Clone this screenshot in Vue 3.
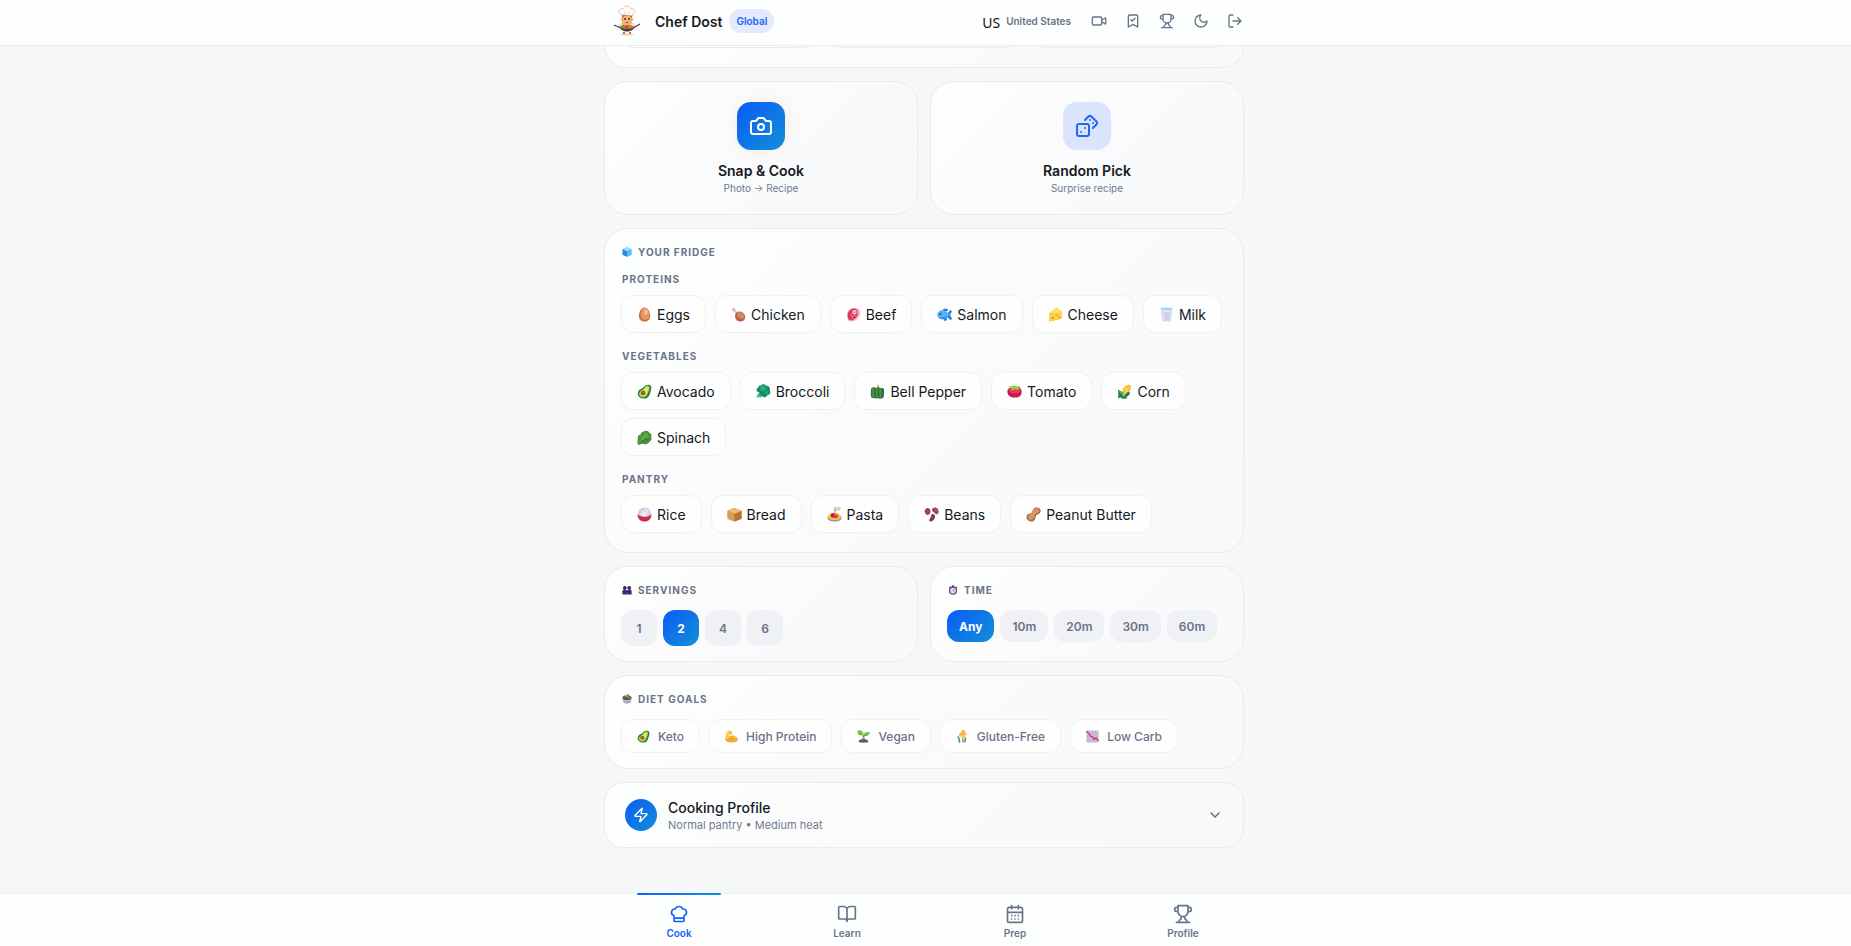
<script setup>
import { ref } from 'vue'

const icons = {
  video: '<path d="m16 13 5.223 3.482a.5.5 0 0 0 .777-.416V7.87a.5.5 0 0 0-.752-.432L16 10.5"/><rect x="2" y="6" width="14" height="12" rx="2"/>',
  saved: '<path d="m19 21-7-4-7 4V5a2 2 0 0 1 2-2h10a2 2 0 0 1 2 2Z"/><path d="m9 10 2 2 4-4"/>',
  trophy: '<path d="M6 9H4.5a2.5 2.5 0 0 1 0-5H6M18 9h1.5a2.5 2.5 0 0 0 0-5H18M4 22h16M10 14.66V17c0 .55-.47.98-.97 1.21C7.85 18.75 7 20.24 7 22M14 14.66V17c0 .55.47.98.97 1.21C16.15 18.75 17 20.24 17 22M18 2H6v7a6 6 0 0 0 12 0V2Z"/>',
  moon: '<path d="M12 3a6 6 0 0 0 9 9 9 9 0 1 1-9-9Z"/>',
  logout: '<path d="M9 21H5a2 2 0 0 1-2-2V5a2 2 0 0 1 2-2h4M16 17l5-5-5-5M21 12H9"/>',
  camera: '<path d="M14.5 4h-5L7 7H4a2 2 0 0 0-2 2v9a2 2 0 0 0 2 2h16a2 2 0 0 0 2-2V9a2 2 0 0 0-2-2h-3l-2.500-3z"/><circle cx="12" cy="13" r="3"/>',
  dices: '<rect width="12" height="12" x="2" y="10" rx="2"/><path d="m17.92 14 3.5-3.5a2.24 2.24 0 0 0 0-3l-5-4.920a2.24 2.24 0 0 0-3 0L10 6M6 18h.01M10 14h.01M15 6h.01M18 9h.01"/>',
  zap: '<path d="M4 14a1 1 0 0 1-.78-1.630l9.900-10.200a.5.5 0 0 1 .86.460l-1.920 6.020A1 1 0 0 0 13 10h7a1 1 0 0 1 .78 1.630l-9.900 10.200a.5.5 0 0 1-.86-.460l1.920-6.020A1 1 0 0 0 11 14z"/>',
  chevron: '<path d="m6 9 6 6 6-6"/>',
  hat: '<path d="M17 21a1 1 0 0 0 1-1v-5.350c0-.457.316-.844.727-1.041a4 4 0 0 0-2.134-7.589 5 5 0 0 0-9.186 0 4 4 0 0 0-2.134 7.588c.411.198.727.585.727 1.041V20a1 1 0 0 0 1 1ZM6 17h12"/>',
  book: '<path d="M12 7v14M3 18a1 1 0 0 1-1-1V4a1 1 0 0 1 1-1h5a4 4 0 0 1 4 4 4 4 0 0 1 4-4h5a1 1 0 0 1 1 1v13a1 1 0 0 1-1 1h-6a3 3 0 0 0-3 3 3 3 0 0 0-3-3z"/>',
  calendar: '<path d="M8 2v4M16 2v4M3 10h18M8 14h.01M12 14h.01M16 14h.01M8 18h.01M12 18h.01M16 18h.01"/><rect width="18" height="18" x="3" y="4" rx="2"/>'
}

const art = {
  ice: '<path d="M16 1 30 7v18l-14 6-14-6V7z" fill="#35a8ee"/><path d="M16 1 30 7l-14 7L2 7z" fill="#8ee4ff"/><path d="M16 14 30 7v18l-14 6z" fill="#49c1f7"/><path d="M16 14 2 7v18l14 6z" fill="#2f86e0"/>',
  egg: '<path d="M16 1c7 0 12 10 12 18 0 7-5 12-12 12S4 26 4 19C4 11 9 1 16 1z" fill="#c9733f"/><path d="M17 2c6 1 9 9 9 16 0 6-4 9-9 9S8 23 8 17 12 2 17 2z" fill="#e39a62"/><ellipse cx="19" cy="11" rx="4" ry="6" fill="#f4bd8c"/>',
  chicken: '<path d="m3 5 3-4 4 3-1 3 7 6-4 3-7-7-4-1z" fill="#d8b5e8"/><path d="M11 12c7-5 17-1 19 7 2 9-7 14-14 11-7-2-10-12-5-18z" fill="#b9684d"/><path d="M15 12c7-2 13 2 13 8 0 5-6 6-9 3-5-2-8-8-4-11z" fill="#d28a63"/><path d="M11 23c4 7 12 8 18 2-1 7-17 8-18-2z" fill="#c94667"/>',
  beef: '<path d="M9 5C17-1 28 1 30 9c2 9-4 18-13 21-8 3-14 0-14-7C0 15 3 9 9 5z" fill="#f1b6c0"/><path d="M8 7C16 0 25 4 25 12c0 9-5 13-12 16-6 2-9-2-9-8-1-5 0-9 4-13z" fill="#d8385d"/><circle cx="18" cy="11" r="4.500" fill="#ffe4e3"/><circle cx="18" cy="11" r="2" fill="#bb405d"/><path d="M9 15c4 3 6 6 4 10M14 19l7-2" stroke="#f98a9c" stroke-width="2" fill="none"/>',
  fish: '<path d="M10 8 16 3l7 1v5zM12 23l5 8 5-5-2-5z" fill="#2f7cd6"/><path d="m20 16 9-10 3 4-4 6 4 9-3 3-9-8z" fill="#2f86e4"/><path d="M0 17C2 4 18 3 26 16 19 30 3 29 0 17z" fill="#51b4fa"/><path d="M3 21c6 3 15 1 21-4-7 12-17 11-21 4z" fill="#3a8ce6"/><circle cx="7" cy="15" r="2" fill="#183e80"/>',
  cheese: '<path d="M4 13 18 1l11 8v16L2 31z" fill="#f5bd38"/><path d="M4 13 18 1l11 8-2 4z" fill="#ffe062"/><path d="m3 15 26-4v14L2 31z" fill="#ffd145"/><circle cx="10" cy="23" r="2.500" fill="#e69a2c"/><circle cx="19" cy="17" r="1.500" fill="#e69a2c"/><circle cx="24" cy="22" r="2" fill="#e69a2c"/>',
  milk: '<path d="m3 1 4 30h18l4-30z" fill="#b8e7f8"/><path d="m6 7 3 21h14l3-21z" fill="#e9e2f5"/><path d="m10 10 2 18h10l2-18z" fill="#d7cce8"/><path d="M5 3h22v3H5z" fill="#8ad3ef"/>',
  avocado: '<path d="M22 2c7-2 10 3 8 10-2 8-4 19-14 19C7 31 0 26 2 18 4 10 11 11 14 7c2-3 4-4 8-5z" fill="#267e43"/><path d="M21 4c6-1 7 4 5 9-2 6-5 15-12 15-6 0-11-4-9-9 2-6 8-6 11-10 1-3 2-4 5-5z" fill="#b9dc37"/><path d="M20 7c5 0 4 4 2 9-2 5-4 10-9 9-5 0-7-5-3-8s6-10 10-10z" fill="#e0ec70"/><circle cx="13" cy="19" r="5" fill="#875f31"/><circle cx="12" cy="17" r="2" fill="#b17b3a"/>',
  broccoli: '<path d="m1 29 2-6 9-9 8 6-10 9-4-1z" fill="#34bba1"/><path d="M10 3c4-4 11-2 12 1 6-1 9 5 7 9 4 5 0 11-4 10-2 6-9 7-12 2-5 0-7-3-5-7-8-1-9-9-3-10 0-4 2-5 5-5z" fill="#168f63"/><circle cx="15" cy="9" r="6" fill="#24b177"/><circle cx="23" cy="17" r="4" fill="#1fa87b"/>',
  pepper: '<path d="M13 8c1-2 3-3 2-6l4-1c1 4-1 5 0 8z" fill="#b5d34b"/><path d="M2 12c1-6 8-6 11-3 5-3 8-2 10 0 6-2 8 2 7 8l-1 12c-4 3-8 3-12 1-4 2-7 1-9 0-8 2-6-11-6-18z" fill="#2c7145"/><path d="M7 8v21M14 10v19M22 9v20" stroke="#57953f" stroke-width="4"/><path d="M10 9v20M18 10v19" stroke="#2c6c3d" stroke-width="2"/>',
  tomato: '<path d="M1 14C2 7 12 6 16 9c5-4 15-2 15 6 1 11-6 14-15 14S0 24 1 14z" fill="#c9164b"/><path d="M3 12c3-7 23-6 26 1 1 9-23 11-26-1z" fill="#e8375f"/><path d="M2 5h9l5-2 4 2h10l-5 5 1 3-9-2-8 3 1-5z" fill="#92ce35"/>',
  corn: '<path d="M12 14C14 4 24-1 29 3c2 6-2 15-9 20l-9-2z" fill="#edaf2b"/><path d="m16 8 12 6M14 12l11 6M22 2l-6 18M27 3l-8 18" stroke="#ffe16a" stroke-width="2"/><path d="M2 12c7 3 12 6 13 13l8-8 5 1c-1 6-5 8-9 10l4 2c-7 3-12 1-16-2l-5 3 1-8z" fill="#17803c"/><path d="M4 15c6 4 9 8 10 13" stroke="#59bd4d" stroke-width="3" fill="none"/>',
  spinach: '<path d="M1 30c0-5 0-7 1-10-2-7 2-9 6-11 1-5 5-6 9-7 5-2 9 1 9 4 6 2 6 6 4 9 3 5 0 7-3 10-5 6-10 6-17 4l-5 3z" fill="#4b913c"/><path d="m5 25 19-18M8 12l5 4v7M17 6v8h8" stroke="#86bd45" stroke-width="2" fill="none"/><path d="m8 29 4-7 13-2" stroke="#277334" stroke-width="2" fill="none"/>',
  rice: '<path d="M1 16c1 10 6 15 15 15s14-5 15-15z" fill="#d52448"/><path d="M2 16C2 6 9 1 16 1s14 5 14 15c-6 7-22 7-28 0z" fill="#d3c9de"/><path d="M7 13c3-7 11-11 17-7 2 4 0 11-4 13-5 2-12 0-13-6z" fill="#f0e9f5"/><path d="m10 6 2 2m4-3 1 2m-8 4 2 1m8 2 3-1m-6-5 3 2m3-4 2 2" stroke="#aba4bd" stroke-width="1.500"/>',
  bread: '<path d="m1 8 14-6 16 6v17l-15 6L2 25z" fill="#c58143"/><path d="m1 8 14-6 16 6-15 7z" fill="#ebbb72"/><path d="m1 9 15 6v16L1 25z" fill="#d79c58"/><path d="m16 15 15-6v16l-15 6z" fill="#b97338"/>',
  pasta: '<ellipse cx="16" cy="24" rx="15" ry="7" fill="#9180c0"/><ellipse cx="16" cy="21" rx="15" ry="7" fill="#f1c73d"/><ellipse cx="16" cy="18" rx="10" ry="6" fill="#f5a737"/><circle cx="13" cy="18" r="5" fill="#b52451"/><circle cx="19" cy="20" r="4" fill="#dc3450"/><path d="M14 2h15M15 6h13M17 3v12" stroke="#a9a6b9" stroke-width="2"/><path d="M17 4v12" stroke="#e8b04d" stroke-width="3" fill="none"/>',
  beans: '<path d="M3 5c7-7 11 1 11 5-1 5-4 7-7 7-5-1-7-9-4-12z" fill="#93424e"/><path d="M20 2c7-3 12 3 11 9-2 7-7 4-9 1-4-2-8-7-2-10z" fill="#9a4551"/><path d="M19 15c7 1 5 10 0 14-5 4-10 1-7-3 4-3 1-11 7-11z" fill="#7d354a"/><path d="m7 7 2 2m16-4 1 4m-8 10-1 4" stroke="#c36a70" stroke-width="2"/>',
  peanut: '<path d="M21 1c7-1 11 3 10 9-2 6-8 5-10 9-1 6-2 12-10 12-8-1-12-7-9-13 2-5 7-3 10-6s2-9 9-11z" fill="#ae6547"/><path d="M20 3c6-2 9 2 8 6-2 4-7 3-9 8-2 5-3 10-9 10-6-1-7-5-5-8 2-4 6-3 9-7 1-4 1-7 6-9z" fill="#dd9d6d"/><path d="m20 4 6 4m-9-1 5 4m-10 4 6 2m-9 1 5 5m-8-3 4 4" stroke="#bc7750" stroke-width="1.500"/>',
  people: '<circle cx="9" cy="9" r="6" fill="#35205e"/><circle cx="23" cy="9" r="6" fill="#35205e"/><path d="M1 30v-9c0-5 3-7 8-7s7 2 7 5c0-3 2-5 7-5s8 2 8 7v9z" fill="#4f2c80"/><path d="M3 21h26M8 13v17M24 13v17" stroke="#382061" stroke-width="2"/>',
  clock: '<path d="M12 1h8v6h-8zM3 8l4-4 3 3-4 4zm21-1 2-3 4 5-3 2z" fill="#67547a"/><circle cx="16" cy="18" r="13" fill="#5b4775"/><circle cx="16" cy="18" r="9" fill="#e2d7f2"/><path d="m21 13-5 5 4 3" stroke="#df3155" stroke-width="2" fill="none"/>',
  salad: '<path d="M2 15C0 8 8 3 12 6c3-6 10-5 12 0 6 0 8 6 6 10-5 6-24 6-28-1z" fill="#237241"/><circle cx="9" cy="10" r="4" fill="#cd3557"/><circle cx="23" cy="12" r="4" fill="#e14768"/><circle cx="16" cy="7" r="4" fill="#80b849"/><path d="M2 17c3 5 25 5 28 0-1 8-4 14-14 14S3 25 2 17z" fill="#b5a4cb"/>',
  muscle: '<path d="m5 5 7-4 6 5-2 5-5-1-1 7c7-7 18-3 21 4 2 7-4 10-13 10C7 31 0 27 1 20z" fill="#f2a32d"/><path d="m6 5 5-2 5 4-5 1-2 12c-3 3-5 4-6 0z" fill="#ffcf45"/><path d="M13 19c7-6 15-3 16 4-4-4-11-5-16-4z" fill="#ffd25c"/><path d="M4 23c5 5 17 6 25 0-2 8-23 8-25 0z" fill="#f8b838"/>',
  sprout: '<path d="M14 13C5 15 1 9 1 2c9-2 14 2 15 9 3-6 8-7 15-6 0 7-5 11-13 9v13h-4z" fill="#5ca83b"/><path d="M3 4c5 1 9 3 12 8 3-4 7-5 14-5" stroke="#9bd36b" stroke-width="3" fill="none"/><path d="M4 29c0-5 6-7 12-7s12 3 12 7c-1 3-24 3-24 0z" fill="#7d4c54"/><path d="M15 13h3v10h-3z" fill="#65ad40"/>',
  wheat: '<path d="M17 31V13" stroke="#5a9b52" stroke-width="3"/><path d="m9 31-2-11m14 10 3-11" stroke="#479c72" stroke-width="4"/><path d="M12 7c0-5 3-7 7-7s5 3 2 7c5-2 7 2 3 5l-5 3c-5-1-9 4-11-1-2-4 1-5 4-7z" fill="#f4bc3f"/><path d="M12 15c0-5 12-4 12 1s-7 8-8 4z" fill="#f0cb63"/><path d="M4 15c4 0 6 4 5 8-4 0-7-4-5-8z" fill="#74ab56"/>',
  chart: '<rect x="1" y="1" width="30" height="30" rx="2" fill="#cbbddf"/><path d="M1 8h30M1 16h30M1 24h30M8 1v30M16 1v30M24 1v30" stroke="#b5a7cd"/><path d="m1 3 6 6 5 7 4 1 4 5 5-2 6 7" stroke="#e31e54" stroke-width="3" fill="none"/>'
}

const fridge = [
  { name: 'Proteins', items: [['egg', 'Eggs'], ['chicken', 'Chicken'], ['beef', 'Beef'], ['fish', 'Salmon'], ['cheese', 'Cheese'], ['milk', 'Milk']] },
  { name: 'Vegetables', items: [['avocado', 'Avocado'], ['broccoli', 'Broccoli'], ['pepper', 'Bell Pepper'], ['tomato', 'Tomato'], ['corn', 'Corn'], ['spinach', 'Spinach']] },
  { name: 'Pantry', items: [['rice', 'Rice'], ['bread', 'Bread'], ['pasta', 'Pasta'], ['beans', 'Beans'], ['peanut', 'Peanut Butter']] }
]
const diets = [['avocado', 'Keto'], ['muscle', 'High Protein'], ['sprout', 'Vegan'], ['wheat', 'Gluten-Free'], ['chart', 'Low Carb']]
const tools = [['video', 'Videos'], ['saved', 'Saved recipes'], ['trophy', 'Achievements'], ['moon', 'Dark mode'], ['logout', 'Sign out']]
const tabs = [['hat', 'Cook'], ['book', 'Learn'], ['calendar', 'Prep'], ['trophy', 'Profile']]

const servings = ref(2)
const time = ref('Any')
const tab = ref('Cook')
const picked = ref([])

function toggle(name) {
  picked.value = picked.value.includes(name) ? picked.value.filter((n) => n !== name) : [...picked.value, name]
}
</script>

<template>
  <div class="page">
    <header class="topbar">
      <div class="topbar-inner">
        <svg class="logo" viewBox="0 0 32 32" aria-hidden="true">
          <circle cx="16" cy="16" r="16" fill="#fff" />
          <ellipse cx="16" cy="29.500" rx="7" ry="1.500" fill="#f8d9b9" />
          <path d="M11 18c-3 1-3 4-2 6h14c1-2 1-5-2-6z" fill="#f8eee4" stroke="#cc9b79" stroke-width=".6" />
          <path d="M11 10h10v7c0 5-10 5-10 0z" fill="#f5b477" />
          <path d="M11 9h10v4l-2-2h-6l-2 2z" fill="#a65a2c" />
          <circle cx="10.800" cy="14.500" r="1.200" fill="#efa368" /><circle cx="21.200" cy="14.500" r="1.200" fill="#efa368" />
          <circle cx="14" cy="14" r=".9" fill="#3b2820" /><circle cx="18" cy="14" r=".9" fill="#3b2820" />
          <path d="M14 17c1 1.500 3 1.500 4 0z" fill="#b73431" />
          <path d="M10 10c0-2-2-1-2-3 0-3 3-4 4-3 1-4 7-4 8 0 3-1 5 2 3 4-2 1-1 1-1 3-4-1-8-1-12-1z" fill="#fffdf9" stroke="#d5b8a0" stroke-width=".8" />
          <path d="M14 6v3m4-3v3" stroke="#dfc9b9" stroke-width=".7" />
          <path d="m3 20 7 3m19-4-7 4" stroke="#403d47" stroke-width="1.200" />
          <path d="M9 22h14c-1 6-13 6-14 0z" fill="#3e3d4a" />
          <ellipse cx="16" cy="22" rx="7" ry="2" fill="#d8632b" />
          <circle cx="12" cy="21" r="1.500" fill="#55a53e" /><circle cx="19" cy="21" r="1.500" fill="#70b943" /><circle cx="16" cy="22" r="1.500" fill="#db3b2f" />
          <path d="M13 27v2m6-2v2" stroke="#a47b5c" stroke-width="2" />
        </svg>
        <span class="brand">Chef Dost</span>
        <span class="badge">Global</span>
        <button class="country" type="button"><span class="code">US</span><span>United States</span></button>
        <button v-for="[icon, label] in tools" :key="icon" class="tool" type="button" :aria-label="label">
          <svg class="line" viewBox="0 0 24 24" v-html="icons[icon]"></svg>
        </button>
      </div>
    </header>

    <main class="content">
      <section class="card tail"><div></div><div></div><div></div></section>

      <div class="pair">
        <button class="card action" type="button">
          <span class="tile solid"><svg class="line" viewBox="0 0 24 24" v-html="icons.camera"></svg></span>
          <span class="action-title">Snap &amp; Cook</span>
          <span class="note">Photo → Recipe</span>
        </button>
        <button class="card action" type="button">
          <span class="tile soft"><svg class="line" viewBox="0 0 24 24" v-html="icons.dices"></svg></span>
          <span class="action-title">Random Pick</span>
          <span class="note">Surprise recipe</span>
        </button>
      </div>

      <section class="card panel fridge">
        <h2 class="heading"><svg class="mini" viewBox="0 0 32 32" v-html="art.ice"></svg>Your Fridge</h2>
        <div v-for="group in fridge" :key="group.name" class="group">
          <h3 class="heading">{{ group.name }}</h3>
          <div class="chips">
            <button v-for="[pic, name] in group.items" :key="name" class="chip" type="button" :aria-pressed="picked.includes(name)" @click="toggle(name)">
              <svg class="emoji" viewBox="0 0 32 32" v-html="art[pic]"></svg>{{ name }}
            </button>
          </div>
        </div>
      </section>

      <div class="pair">
        <section class="card panel">
          <h2 class="heading"><svg class="mini" viewBox="0 0 32 32" v-html="art.people"></svg>Servings</h2>
          <div class="options">
            <button v-for="n in [1, 2, 4, 6]" :key="n" class="option square" :class="{ on: servings === n }" type="button" @click="servings = n">{{ n }}</button>
          </div>
        </section>
        <section class="card panel">
          <h2 class="heading"><svg class="mini" viewBox="0 0 32 32" v-html="art.clock"></svg>Time</h2>
          <div class="options">
            <button v-for="t in ['Any', '10m', '20m', '30m', '60m']" :key="t" class="option" :class="{ on: time === t }" type="button" @click="time = t">{{ t }}</button>
          </div>
        </section>
      </div>

      <section class="card panel diet">
        <h2 class="heading"><svg class="mini" viewBox="0 0 32 32" v-html="art.salad"></svg>Diet Goals</h2>
        <div class="chips">
          <button v-for="[pic, name] in diets" :key="name" class="chip goal" type="button" :aria-pressed="picked.includes(name)" @click="toggle(name)">
            <svg class="emoji" viewBox="0 0 32 32" v-html="art[pic]"></svg>{{ name }}
          </button>
        </div>
      </section>

      <button class="card profile" type="button">
        <span class="bolt"><svg class="line" viewBox="0 0 24 24" v-html="icons.zap"></svg></span>
        <span class="profile-text">
          <span class="profile-title">Cooking Profile</span>
          <span class="note">Normal pantry • Medium heat</span>
        </span>
        <svg class="line chevron" viewBox="0 0 24 24" v-html="icons.chevron"></svg>
      </button>
    </main>

    <nav class="tabbar">
      <div class="tabs">
        <a v-for="[icon, label] in tabs" :key="label" href="#" class="tab" :class="{ current: tab === label }" @click.prevent="tab = label">
          <svg class="line" viewBox="0 0 24 24" v-html="icons[icon]"></svg>
          <span>{{ label }}</span>
        </a>
      </div>
    </nav>
  </div>
</template>

<style>
body {
  margin: 0;
  background: #f6f7f9;
}
</style>

<style scoped>
.page {
  display: flex;
  flex-direction: column;
  min-height: 100vh;
  box-sizing: border-box;
  font-family: Inter, "Noto Sans", sans-serif;
  color: #151922;
  background: #f6f7f9;
}
.page * {
  box-sizing: border-box;
}
button {
  margin: 0;
  padding: 0;
  border: 0;
  background: none;
  font: inherit;
  color: inherit;
  cursor: pointer;
}
.line {
  width: 16px;
  height: 16px;
  fill: none;
  stroke: currentColor;
  stroke-width: 2;
  stroke-linecap: round;
  stroke-linejoin: round;
}
.topbar {
  position: sticky;
  top: 0;
  z-index: 2;
  height: 46px;
  padding-right: 3px;
  background: #fdfffe;
  border-bottom: 1px solid #eaecef;
}
.topbar-inner {
  display: flex;
  align-items: center;
  max-width: 640px;
  height: 42px;
  margin: 0 auto;
  padding-left: 7px;
}
.logo {
  width: 32px;
  height: 32px;
}
.brand {
  margin-left: 12px;
  font-size: 14px;
  font-weight: 600;
}
.badge {
  margin: 0 auto 0 7px;
  padding: 0 7px;
  border-radius: 12px;
  background: #e4eafc;
  color: #2563f5;
  font-size: 10px;
  font-weight: 600;
  line-height: 24px;
}
.country {
  display: flex;
  align-items: center;
  gap: 6px;
  margin-right: 11px;
  font-size: 10px;
  font-weight: 600;
  color: #6b7387;
}
.code {
  padding-top: 4px;
  font-family: "Noto Sans", sans-serif;
  font-size: 14px;
  font-weight: 400;
  line-height: 18px;
  color: #111;
}
.tool {
  display: grid;
  place-items: center;
  width: 34px;
  height: 34px;
  color: #697187;
}
.tool:last-child {
  width: 26px;
  padding-left: 8px;
}
.content {
  display: flex;
  flex-direction: column;
  gap: 13px;
  width: 100%;
  max-width: 643px;
  margin: 0 auto;
  padding: 0 3px 44px 0;
  flex: 1;
}
.card {
  border: 1px solid #e9ebee;
  border-radius: 24px;
  background: linear-gradient(135deg, #fdfefe, #fbfbfc 40%, #f9fafc 60%, #f8f9fb);
}
.tail {
  display: grid;
  grid-template-columns: repeat(3, 1fr);
  gap: 8px;
  height: 22px;
  padding: 0 16px;
  border-top: 0;
  border-radius: 0 0 24px 24px;
  overflow: hidden;
}
.tail div {
  height: 26px;
  margin-top: -24px;
  border: 1px solid #eceef1;
  border-radius: 16px;
}
.pair {
  display: grid;
  grid-template-columns: 1fr 1fr;
  gap: 12px;
}
.action {
  display: flex;
  flex-direction: column;
  align-items: center;
  padding: 20px 16px 19px;
}
.tile {
  display: grid;
  place-items: center;
  width: 48px;
  height: 48px;
  margin-bottom: 11px;
  border-radius: 14px;
}
.tile .line {
  width: 24px;
  height: 24px;
}
.solid,
.bolt,
.option.on {
  background: linear-gradient(135deg, #0b5cf5, #128fda);
  color: #fff;
}
.solid {
  box-shadow: 0 0 16px rgba(249, 115, 22, 0.12);
}
.soft {
  background: #dae4fc;
  color: #2467f5;
}
.action-title {
  font-size: 14px;
  font-weight: 600;
  line-height: 20px;
}
.note {
  font-size: 11px;
  line-height: 14px;
  color: #717a8f;
}
.action .note {
  font-size: 10px;
}
.panel {
  padding: 16px 16px 15px;
}
.heading {
  display: flex;
  align-items: center;
  gap: 6px;
  margin: 0;
  padding-left: 1px;
  font-size: 10px;
  font-weight: 700;
  line-height: 14px;
  letter-spacing: 1px;
  text-transform: uppercase;
  color: #6b7389;
}
.mini {
  width: 10px;
  height: 10px;
}
.fridge {
  padding-bottom: 19px;
}
.group {
  margin-top: 13px;
}
.group + .group {
  margin-top: 16px;
}
.chips {
  display: flex;
  flex-wrap: wrap;
  gap: 8px 9px;
  margin-top: 9px;
}
.chip {
  display: flex;
  align-items: center;
  gap: 5px;
  height: 38px;
  padding: 0 15px;
  border: 1px solid #eff1f5;
  border-radius: 12px;
  background: #fefefe;
  font-size: 14px;
}
.emoji {
  width: 15px;
  height: 15px;
}
.options {
  display: flex;
  align-items: flex-start;
  gap: 6px;
  margin-top: 13px;
}
.option {
  height: 32px;
  padding: 0 12px;
  border-radius: 12px;
  background: #f0f1f4;
  color: #6b7389;
  font-size: 12px;
  font-weight: 600;
}
.square {
  width: 36px;
  height: 36px;
  padding: 0;
}
.option.on {
  font-weight: 700;
}
.diet {
  padding-bottom: 15px;
}
.diet .chips {
  margin-top: 13px;
}
.goal {
  gap: 8px;
  height: 34px;
  font-size: 12px;
  font-weight: 500;
  color: #6b7389;
}
.goal .emoji {
  width: 13px;
  height: 13px;
}
.profile {
  display: flex;
  align-items: center;
  min-height: 66px;
  padding: 0 20px;
  border-radius: 20px;
  text-align: left;
}
.bolt {
  display: grid;
  place-items: center;
  width: 32px;
  height: 32px;
  margin-right: 11px;
  border-radius: 50%;
}
.profile-text {
  display: flex;
  flex-direction: column;
  flex: 1;
}
.profile-title {
  font-size: 14px;
  font-weight: 500;
  line-height: 20px;
}
.chevron {
  color: #5f687c;
}
.tabbar {
  position: sticky;
  bottom: 0;
  padding-left: 11px;
  background: #fdfffe;
  border-top: 1px solid #eceff0;
}
.tabs {
  display: grid;
  grid-template-columns: repeat(4, 1fr);
  max-width: 672px;
  margin: 0 auto;
}
.tab {
  position: relative;
  display: flex;
  flex-direction: column;
  align-items: center;
  gap: 2px;
  padding: 10px 0 6px;
  color: #6b7389;
  font-size: 10px;
  font-weight: 600;
  line-height: 14px;
  text-decoration: none;
}
.tab .line {
  width: 20px;
  height: 20px;
}
.current {
  color: #1460fb;
}
.current::before {
  content: "";
  position: absolute;
  top: -1px;
  left: 25%;
  width: 50%;
  height: 2px;
  border-radius: 2px;
  background: linear-gradient(90deg, #1460fb, #128fda);
}
</style>
